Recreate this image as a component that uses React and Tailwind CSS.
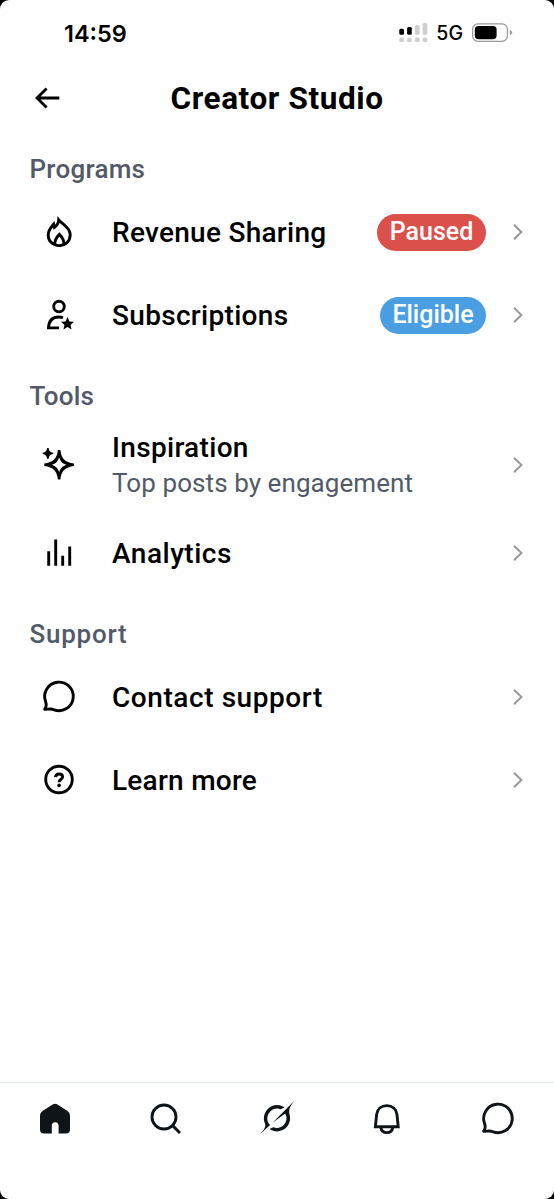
import React from "react";

const Svg = ({ children, size = "size-9" }) => (
  <svg
    viewBox="0 0 36 36"
    className={`${size} shrink-0`}
    fill="none"
    stroke="currentColor"
    strokeWidth="2.9"
  >
    {children}
  </svg>
);

const Flame = () => (
  <Svg>
    <path
      d="M17.7 6C20.5 9.6 29.2 12.9 29.2 20.7C29.2 27.1 24.6 31.6 18.2 31.6C11.9 31.6 7.2 27.1 7.2 20.9C7.2 16 9.9 13.6 12.7 10.2L13.5 13.4C16.2 11.3 17.6 9 17.7 6Z"
      strokeMiterlimit="8"
    />
    <path d="M14.2 31C12.7 26.5 15.6 23.2 18.4 20.4C21.2 23.2 24 26.5 22.5 31" />
  </Svg>
);

const PersonStar = () => (
  <Svg>
    <circle cx="18" cy="9.6" r="5.3" />
    <path d="M18 30.9H7.5C7.8 23.8 11.2 20 17.8 20C19.5 20 20.8 20.3 22 20.8" />
    <path
      d="M26.5 20L28.4 24.4L33 24.8L29.5 27.9L30.6 32.6L26.5 30.1L22.4 32.6L23.5 27.9L20 24.8L24.6 24.4Z"
      fill="currentColor"
      stroke="none"
    />
  </Svg>
);

const Sparkles = () => (
  <Svg>
    <path
      d="M16.9 3H19.4C20.3 11.4 23.9 15.4 33 16.5V19C23.9 20.1 20.3 24.1 19.4 32.4H16.9C16 24.1 12.4 20.1 3.3 19V16.5C12.4 15.4 16 11.4 16.9 3ZM18.15 10.4C16.9 14.2 14.9 16.5 10.9 17.75C14.9 19 16.9 21.3 18.15 25.1C19.4 21.3 21.4 19 25.4 17.75C21.4 16.5 19.4 14.2 18.15 10.4Z"
      fill="currentColor"
      fillRule="evenodd"
      stroke="none"
    />
    <path
      d="M6.1 1H7.6C8 4.1 9.1 5.2 12.2 5.7V7.1C9.1 7.6 8 8.7 7.6 11.8H6.1C5.7 8.7 4.6 7.6 1.6 7.1V5.7C4.6 5.2 5.7 4.1 6.1 1Z"
      fill="currentColor"
      stroke="none"
    />
  </Svg>
);

const Bars = () => (
  <Svg>
    <path d="M7.7 30.8V16.2M14.7 30.8V4.5M21.7 30.8V20.8M28.7 30.8V11.5" />
  </Svg>
);

const Bubble = () => (
  <Svg>
    <path
      d="M4.5 22.3A14.3 14.3 0 1 1 13.1 30.9C10.8 29.4 8.8 30.1 3.6 30.3C5.6 28 5.6 25.5 4.5 22.3Z"
      strokeLinejoin="round"
    />
  </Svg>
);

const Help = () => (
  <Svg>
    <circle cx="18" cy="17.5" r="13.3" />
    <path d="M14.5 15.2C14.7 13 16.1 12 18.1 12C20.1 12 21.6 13.1 21.6 14.9C21.6 17.4 18.1 17.2 18.1 20.2" />
    <circle cx="18.1" cy="23.4" r="1.8" fill="currentColor" stroke="none" />
  </Svg>
);

const Home = () => (
  <Svg>
    <path
      d="M16 3.3Q18 2.1 20 3.3L30.5 10.1Q33 11.7 33 14.5V28.5Q33 32.5 29 32.5H21.6V24.7Q21.6 21.2 18.2 21.2Q14.8 21.2 14.8 24.7V32.5H7Q3 32.5 3 28.5V14.5Q3 11.7 5.5 10.1Z"
      fill="currentColor"
      stroke="none"
    />
  </Svg>
);

const Search = () => (
  <Svg>
    <circle cx="16" cy="16" r="12" />
    <path d="M24.4 24.4L32 32" />
  </Svg>
);

const Grok = () => (
  <svg viewBox="0 0 33 32" className="h-[34px] w-[35px]" fill="currentColor">
    <path d="M12.745 20.54l10.97-8.19c.539-.4 1.307-.244 1.564.38 1.349 3.288.746 7.241-1.938 9.955-2.683 2.714-6.417 3.31-9.83 1.954l-3.728 1.745c5.347 3.697 11.84 2.782 15.898-1.324 3.219-3.255 4.216-7.692 3.284-11.693l.008.009c-1.351-5.878.332-8.227 3.782-13.031L33 0l-4.54 4.59v-.014L12.743 20.544m-2.263 1.987c-3.837-3.707-3.175-9.446.1-12.755 2.42-2.449 6.388-3.448 9.852-1.979l3.72-1.737c-.67-.49-1.53-1.017-2.515-1.387-4.455-1.854-9.789-.931-13.41 2.728-3.483 3.523-4.579 8.94-2.697 13.561 1.405 3.454-.899 5.898-3.22 8.364C1.499 30.2.666 31.074 0 32l10.478-9.466" />
  </svg>
);

const Bell = () => (
  <Svg>
    <path d="M6.4 25.7L7.6 13.6C8.2 8.2 12.2 4.6 17.8 4.6C23.4 4.6 27.4 8.2 28 13.6L29.2 25.7Z" />
    <path d="M11.8 26.5C12.4 30 14.8 31.6 17.8 31.6C20.8 31.6 23.2 30 23.8 26.5" />
  </Svg>
);

const Chevron = () => (
  <svg
    viewBox="0 0 10 16"
    className="h-4 w-2.5 shrink-0 text-[#999999]"
    fill="none"
    stroke="currentColor"
    strokeWidth="2"
  >
    <path d="M1 0.8L8.4 8L1 15.2" />
  </svg>
);

const SignalBars = () => (
  <svg viewBox="0 0 30 20" className="h-5 w-[30px]" fill="#cfcfcf">
    <rect x="0.3" y="5.7" width="4.7" height="6" rx="1.5" fill="#000" />
    <rect x="8.1" y="4" width="4.7" height="7.7" rx="1.5" fill="#000" />
    <rect x="15.9" y="2" width="4.7" height="9.7" rx="1.5" />
    <rect x="23.6" y="0" width="4.7" height="11.7" rx="1.5" />
    <rect x="0.3" y="14.6" width="4.7" height="4.5" rx="1.5" />
    <rect x="8.1" y="14.6" width="4.7" height="4.5" rx="1.5" />
    <rect x="15.9" y="14.6" width="4.7" height="4.5" rx="1.5" />
    <rect x="23.6" y="14.6" width="4.7" height="4.5" rx="1.5" />
  </svg>
);

const Battery = () => (
  <svg viewBox="0 0 41 20" className="h-5 w-[41px]">
    <rect x="0.6" y="0.9" width="34.8" height="17.4" rx="5.4" fill="none" stroke="#999" strokeWidth="1.2" />
    <rect x="2.8" y="3" width="21.8" height="13.2" rx="3.6" />
    <path d="M37.8 7Q40.2 7.8 40.2 9.6Q40.2 11.4 37.8 12.2Z" fill="#999" />
  </svg>
);

const Section = ({ title, spacing, children }) => (
  <section className="pt-[17.5px]">
    <h2 className={`flex h-11 items-center pt-px pl-[29.5px] text-[26px] font-medium text-[#525a69] ${spacing}`}>
      {title}
    </h2>
    {children}
  </section>
);

const Row = ({ icon, label, spacing, subtitle, badge }) => (
  <div className={`flex items-center pr-[31px] pl-[41px] ${subtitle ? "h-[93px]" : "h-[83px]"}`}>
    {icon}
    <div className="ml-[35px] flex-1 pt-0.5 whitespace-nowrap">
      <div className={`text-[28px] leading-9 font-medium ${spacing}`}>{label}</div>
      {subtitle && (
        <div className="text-[26px] leading-[35px] tracking-[0.08px] text-[#525a69]">{subtitle}</div>
      )}
    </div>
    {badge}
    <Chevron />
  </div>
);

const Badge = ({ children, look }) => (
  <span
    className={`mr-[27px] flex h-[37px] items-center justify-center rounded-full text-[25px] font-medium text-white ${look}`}
  >
    {children}
  </span>
);

export default function App() {
  return (
    <div className="h-[1199px] w-[554px] bg-black">
      <div className="flex h-full flex-col overflow-hidden rounded-[9px] bg-white font-['Roboto',sans-serif] text-black">
        <div className="flex h-[66px] items-center justify-between pr-[41px] pl-[64px]">
          <span className="pt-px font-['Inter',sans-serif] text-[23.5px] font-semibold">14:59</span>
          <div className="flex items-center">
            <SignalBars />
            <span className="mr-[9px] ml-[7px] pt-0.5 font-['Inter',sans-serif] text-[19.5px] font-medium">5G</span>
            <Battery />
          </div>
        </div>

        <header className="grid h-[63px] grid-cols-[100px_1fr_100px] items-center">
          <svg
            viewBox="0 0 26 24"
            className="ml-[34px] h-6 w-[26px]"
            fill="none"
            stroke="currentColor"
            strokeWidth="2.8"
          >
            <path d="M25.3 12H3M12.6 2.4L3 12L12.6 21.6" />
          </svg>
          <h1 className="pt-0.5 text-center text-[31.5px] font-bold tracking-[0.6px] whitespace-nowrap">
            Creator Studio
          </h1>
        </header>

        <main className="flex-1">
          <Section title="Programs" spacing="tracking-[0.25px]">
            <Row
              icon={<Flame />}
              label="Revenue Sharing"
              spacing="tracking-[0.27px]"
              badge={<Badge look="w-[109px] bg-[#dc504c]">Paused</Badge>}
            />
            <Row
              icon={<PersonStar />}
              label="Subscriptions"
              spacing="tracking-[0.31px]"
              badge={<Badge look="w-[106px] bg-[#4a9fe3]">Eligible</Badge>}
            />
          </Section>
          <Section title="Tools" spacing="tracking-[0.2px]">
            <Row
              icon={<Sparkles />}
              label="Inspiration"
              spacing="tracking-[0.32px]"
              subtitle="Top posts by engagement"
            />
            <Row icon={<Bars />} label="Analytics" spacing="tracking-[0.5px]" />
          </Section>
          <Section title="Support" spacing="tracking-[0.75px]">
            <Row icon={<Bubble />} label="Contact support" spacing="tracking-[0.57px]" />
            <Row icon={<Help />} label="Learn more" spacing="tracking-[0.25px]" />
          </Section>
        </main>

        <nav className="grid h-[117px] grid-cols-5 justify-items-center border-t border-[#e1e8ea] pt-[17.5px] pr-px text-[#0f1419]">
          <Home />
          <Search />
          <Grok />
          <Bell />
          <Bubble />
        </nav>
      </div>
    </div>
  );
}
